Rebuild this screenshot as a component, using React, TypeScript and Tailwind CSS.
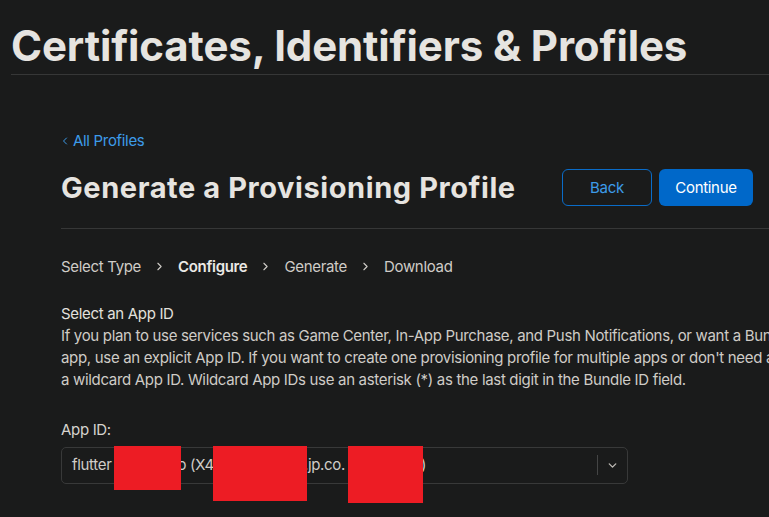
import { ChevronDown, ChevronLeft, ChevronRight } from 'lucide-react';

const steps = [
  { label: 'Select Type', active: false },
  { label: 'Configure', active: true },
  { label: 'Generate', active: false },
  { label: 'Download', active: false },
];

export default function App() {
  return (
    <div className="relative h-[517px] w-[769px] overflow-hidden bg-[#1a1b1b] font-['Inter',sans-serif] text-[#e3e1dd]">
      {/* Page header */}
      <div className="pl-[11px] pt-[21px]">
        <h1 className="text-[42px] font-bold leading-[50px] tracking-[-0.003em] text-[#e6e4e0]">
          Certificates, Identifiers &amp; Profiles
        </h1>
        <div className="mt-[3px] h-px bg-[#363737]" />
      </div>

      <div className="pl-[61px] tracking-[-0.02em]">
        <a className="mt-[56px] flex items-center gap-[2px] text-[15px] leading-[20px] text-[#3d9be9]">
          <ChevronLeft size={12} strokeWidth={2} className="-ml-[2px]" />
          All Profiles
        </a>

        <div className="mt-[15px] flex items-center justify-between pr-[16px]">
          <h2 className="text-[29px] font-bold tracking-[0.02em] text-[#e6e4e0]">
            Generate a Provisioning Profile
          </h2>
          <div className="flex gap-[7px]">
            <button className="h-[37px] w-[90px] rounded-[6px] border border-[#0a6cc8] text-[15px] text-[#3d9be9]">
              Back
            </button>
            <button className="h-[37px] w-[94px] rounded-[6px] bg-[#0068c9] text-[15px] text-white">
              Continue
            </button>
          </div>
        </div>

        <div className="mt-[18px] h-px bg-[#363737]" />

        {/* Steps */}
        <div className="mt-[28px] flex items-center text-[15px] leading-[20px]">
          {steps.map((s, i) => (
            <div key={s.label} className="flex items-center">
              <span className={s.active ? 'font-semibold text-[#ebe9e5]' : 'text-[#cfccc7]'}>{s.label}</span>
              {i < steps.length - 1 && (
                <ChevronRight size={13} strokeWidth={2} className="mx-[12px] text-[#cfccc7]" />
              )}
            </div>
          ))}
        </div>

        {/* App ID section */}
        <div className="mt-[26px] text-[15px] leading-[22px]">
          <p className="text-[#e3e1dd]">Select an App ID</p>
          <p className="whitespace-nowrap text-[#cfccc7]">
            If you plan to use services such as Game Center, In-App Purchase, and Push Notifications, or want a Bundle ID unique to a single
            <br />
            app, use an explicit App ID. If you want to create one provisioning profile for multiple apps or don't need a specific Bundle ID, select
            <br />
            a wildcard App ID. Wildcard App IDs use an asterisk (*) as the last digit in the Bundle ID field.
          </p>
        </div>

        <label className="mt-[29px] block text-[15px] leading-[20px] text-[#d6d3ce]">App ID:</label>
        <div className="mt-[7px] flex h-[37px] w-[567px] items-center rounded-[5px] border border-[#383939] pl-[10px] pr-[6px] text-[15px] text-[#d0cdc8]">
          <span className="flex flex-1 items-center whitespace-nowrap">
            <span>flutter</span>
            <span className="inline-block w-[66px]" />
            <span>o (X4</span>
            <span className="inline-block w-[90px]" />
            <span>.jp.co.</span>
            <span className="inline-block w-[76px]" />
            <span>)</span>
          </span>
          <div className="h-[20px] w-px bg-[#444545]" />
          <ChevronDown size={13} strokeWidth={2.5} className="ml-[8px] mr-[2px] text-[#bdbab5]" />
        </div>
      </div>

      {/* Redaction boxes */}
      <div className="absolute left-[114px] top-[446px] h-[44px] w-[67px] bg-[#ed1c24]" />
      <div className="absolute left-[213px] top-[446px] h-[55px] w-[94px] bg-[#ed1c24]" />
      <div className="absolute left-[348px] top-[446px] h-[57px] w-[75px] bg-[#ed1c24]" />
    </div>
  );
}
